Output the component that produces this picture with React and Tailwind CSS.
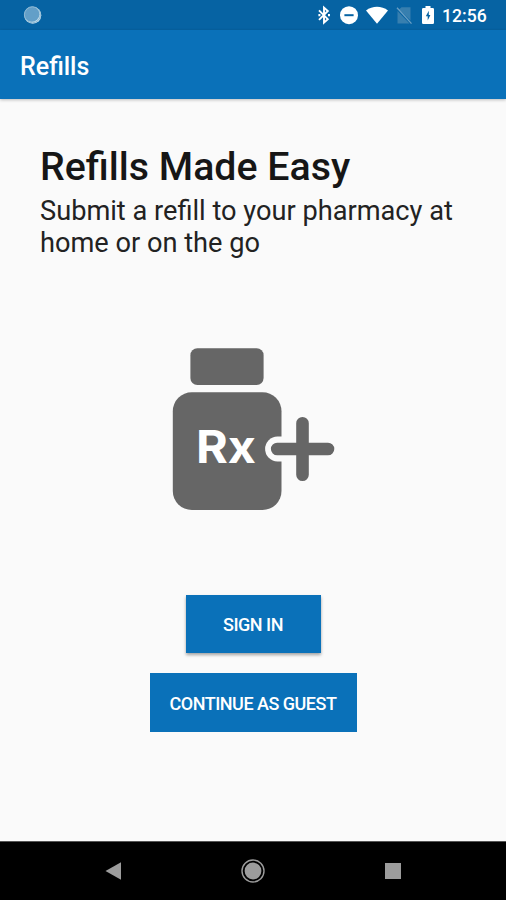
import React from 'react';

function BluetoothIcon() {
  return (
    <svg width="14" height="20" viewBox="0 0 14 20" fill="none" stroke="white" strokeWidth="1.9">
      <path d="M2 5.4 L10.8 14.2 L7 17.6 V2.6 L10.8 6 L2 14.8" />
      <path d="M1.4 9 h2 v2.2 h-2 z M11 9 h2 v2.2 h-2 z" fill="white" stroke="none" />
    </svg>
  );
}

function DoNotDisturbIcon() {
  return (
    <svg width="18" height="20" viewBox="0 0 18 20">
      <circle cx="9" cy="10.2" r="9" fill="white" />
      <rect x="4.4" y="9.2" width="9.2" height="2" fill="#0663a3" />
    </svg>
  );
}

function WifiIcon() {
  return (
    <svg width="22" height="20" viewBox="0 0 22 20">
      <path d="M0 5.5 C6.5 0.5 15.5 0.5 22 5.5 L11 18.8 Z" fill="white" />
    </svg>
  );
}

function NoSimIcon() {
  return (
    <svg width="16" height="20" viewBox="0 0 16 20">
      <path d="M5.5 2.2 H14.5 V15.5 L3 4.5 Z M1.5 6 L13.5 18.5 H1.5 Z" fill="#377faf" />
      <path d="M1 2.8 L15.5 18.6" stroke="#6a9fc4" strokeWidth="1.3" />
    </svg>
  );
}

function BatteryIcon() {
  return (
    <svg width="12" height="20" viewBox="0 0 12 20">
      <path d="M3.5 1 h5 v2 h2.2 q1.3 0 1.3 1.3 v13.4 q0 1.3 -1.3 1.3 h-9.4 q-1.3 0 -1.3 -1.3 v-13.4 q0 -1.3 1.3 -1.3 h2.2 z" fill="white" />
      <path d="M6.8 5.8 L3.8 11.2 H5.7 V15.4 L8.4 9.9 H6.8 Z" fill="#0663a3" />
    </svg>
  );
}

function StatusBar() {
  return (
    <div className="flex h-[30px] items-center bg-[#0663a3] pl-[23px] pr-[19px]">
      <svg width="19" height="20" viewBox="0 0 19 20">
        <circle cx="9.8" cy="10.2" r="8.5" fill="#c3dcea" />
        <circle cx="8.8" cy="9.2" r="7.6" fill="#639fc8" />
        <circle cx="9.4" cy="9.8" r="8" fill="none" stroke="#8fbad5" strokeWidth="1" />
      </svg>
      <div className="ml-auto flex items-center">
        <BluetoothIcon />
        <div className="ml-[9px]">
          <DoNotDisturbIcon />
        </div>
        <div className="ml-2">
          <WifiIcon />
        </div>
        <div className="ml-2">
          <NoSimIcon />
        </div>
        <div className="ml-2.5">
          <BatteryIcon />
        </div>
        <span className="ml-2 mt-0.5 w-[45px] whitespace-nowrap text-[17.6px] leading-5 font-medium text-white">12:56</span>
      </div>
    </div>
  );
}

function PillBottle() {
  return (
    <svg className="ml-[172px] mt-[88px]" width="164" height="164" viewBox="172 347 164 164">
      <rect x="190.4" y="348.3" width="73.2" height="36.7" rx="7" fill="#666666" />
      <rect x="172.8" y="392.3" width="108.7" height="117.7" rx="19" fill="#666666" />
      <path d="M282 436.6 H277.5 A12.4 12.4 0 0 0 277.5 461.4 H282 Z" fill="#fafafa" />
      <path d="M302.5 423.2 V474.8 M277.2 449 H328" stroke="#666666" strokeWidth="12.6" strokeLinecap="round" />
      <text
        x="196"
        y="463"
        textLength="60"
        lengthAdjust="spacingAndGlyphs"
        fill="white"
        className="font-['Inter',sans-serif] text-[45.5px] font-bold"
      >
        Rx
      </text>
    </svg>
  );
}

function NavBar() {
  return (
    <div className="flex h-[59px] items-center justify-between border-t border-[#555555] bg-black pl-[104px] pr-[105px]">
      <svg width="17" height="18" viewBox="0 0 17 18">
        <path d="M1.5 9 L17 0.3 V17.7 Z" fill="#9c9c9c" />
      </svg>
      <svg width="24" height="24" viewBox="0 0 24 24">
        <circle cx="12" cy="12" r="11" fill="none" stroke="#9c9c9c" strokeWidth="1.4" />
        <circle cx="12" cy="12" r="8.4" fill="#9c9c9c" />
      </svg>
      <div className="h-4 w-4 bg-[#9c9c9c]" />
    </div>
  );
}

export default function App() {
  return (
    <div className="flex h-[900px] w-[506px] flex-col bg-[#fafafa] font-['Roboto',sans-serif]">
      <StatusBar />
      <header className="flex h-[69px] items-center bg-[#0a71b9] pl-5 shadow-[0_1px_3px_rgba(0,0,0,0.25)]">
        <h1 className="mt-1 text-[25px] font-medium text-white">Refills</h1>
      </header>

      <main className="flex-1">
        <div className="px-10 pt-11">
          <h2 className="text-[39.3px] leading-[48px] font-medium text-[#161616]">Refills Made Easy</h2>
          <p className="mt-1 text-[27.2px] leading-8 text-[#222222]">
            Submit a refill to your pharmacy at home or on the go
          </p>
        </div>

        <PillBottle />

        <div className="mt-[84px] flex flex-col items-center gap-5">
          <button className="h-[58px] w-[135px] bg-[#0a71b9] pt-px text-[18px] font-medium tracking-[-0.5px] text-white shadow-[0_2px_3px_rgba(0,0,0,0.35)]">
            SIGN IN
          </button>
          <button className="h-[59px] w-[207px] bg-[#0a71b9] pt-px text-[18px] font-medium tracking-[-0.5px] text-white">
            CONTINUE AS GUEST
          </button>
        </div>
      </main>

      <NavBar />
    </div>
  );
}
